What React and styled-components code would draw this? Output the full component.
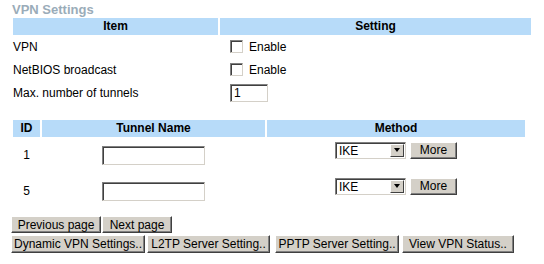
import React from "react";
import styled, { createGlobalStyle } from "styled-components";

const Global = createGlobalStyle`
    body {
        margin: 0;
        background: #fff;
        font-family: "Liberation Sans", Arial, sans-serif;
        font-size: 12px;
        color: #000;
    }
`;

const Page = styled.div`
    width: 544px;
    height: 264px;
    padding: 2px 0 0 13px;
    box-sizing: border-box;
`;

const Title = styled.div`
    margin-left: -1px;
    height: 16px;
    font-size: 13px;
    font-weight: bold;
    color: #9aacb9;
    line-height: 15px;
`;

const Grid = styled.div`
    display: grid;
    grid-template-columns: ${(p) => p.cols};
    column-gap: 2px;
    margin-top: ${(p) => p.top || 0}px;
`;

const Head = styled.div`
    height: 17px;
    background: #b7dbf9;
    font-weight: bold;
    text-align: center;
    line-height: 17px;
`;

const Cell = styled.div`
    height: ${(p) => p.h}px;
    display: flex;
    align-items: center;
    justify-content: ${(p) => (p.center ? "center" : "flex-start")};
    padding-left: ${(p) => p.pad || 0}px;
    padding-bottom: ${(p) => p.lift || 0}px;
    box-sizing: border-box;
`;

const Check = styled.span`
    width: 13px;
    height: 13px;
    box-sizing: border-box;
    border-style: solid;
    border-width: 1px;
    border-color: #808080 #d4d0c8 #d4d0c8 #808080;
    box-shadow: inset 1px 1px 0 #404040;
    background: #fff;
    margin-right: 6px;
`;

const TextBox = styled.div`
    width: ${(p) => p.w}px;
    height: ${(p) => p.h}px;
    box-sizing: border-box;
    border-style: solid;
    border-width: 1px;
    border-color: #808080 #d4d0c8 #d4d0c8 #808080;
    box-shadow: inset 1px 1px 0 #404040;
    background: #fff;
    padding: 2px 0 0 3px;
    line-height: 13px;
`;

const Select = styled.div`
    width: 71px;
    height: 17px;
    box-sizing: border-box;
    border-style: solid;
    border-width: 1px;
    border-color: #808080 #d4d0c8 #d4d0c8 #808080;
    box-shadow: inset 1px 1px 0 #404040;
    background: #fff;
    display: flex;
    align-items: stretch;
    padding: 1px 1px 0 1px;
`;

const SelectValue = styled.span`
    flex: 1;
    padding-left: 2px;
    line-height: 14px;
`;

const Arrow = styled.span`
    width: 14px;
    background: #d4d0c8;
    border-style: solid;
    border-width: 1px;
    border-color: #fff #404040 #404040 #fff;
    box-sizing: border-box;
    display: flex;
    align-items: center;
    justify-content: center;
    margin-bottom: 1px;
    &::after {
        content: "";
        border-left: 3.5px solid transparent;
        border-right: 3.5px solid transparent;
        border-top: 4px solid #000;
    }
`;

const Button = styled.button`
    width: ${(p) => p.w}px;
    height: ${(p) => p.h || 17}px;
    margin-left: ${(p) => p.gap || 0}px;
    padding: 0;
    background: #d4d0c8;
    border-style: solid;
    border-width: 1px;
    border-color: #fff #404040 #404040 #fff;
    box-shadow: inset -1px -1px 0 #808080;
    font-family: "Liberation Sans", Arial, sans-serif;
    font-size: 12px;
    color: #000;
    line-height: 14px;
    box-sizing: border-box;
`;

const Buttons = styled.div`
    display: flex;
    margin: ${(p) => p.top}px 0 0 -2px;
`;

const settings = [
    { label: "VPN", kind: "check" },
    { label: "NetBIOS broadcast", kind: "check" },
    { label: "Max. number of tunnels", kind: "input" },
];

const tunnels = [1, 5];

export default function App() {
    return (
        <Page>
            <Global />
            <Title>VPN Settings</Title>
            <Grid cols="205px 311px">
                <Head>Item</Head>
                <Head>Setting</Head>
                {settings.map((s) => (
                    <React.Fragment key={s.label}>
                        <Cell h={23}>{s.label}</Cell>
                        <Cell h={23} pad={10}>
                            {s.kind === "check" ? (
                                <>
                                    <Check />
                                    Enable
                                </>
                            ) : (
                                <TextBox w={38} h={18}>1</TextBox>
                            )}
                        </Cell>
                    </React.Fragment>
                ))}
            </Grid>
            <Grid cols="27px 223px 258px" top={16}>
                <Head>ID</Head>
                <Head>Tunnel Name</Head>
                <Head>Method</Head>
                {tunnels.map((id) => (
                    <React.Fragment key={id}>
                        <Cell h={36} center>
                            {id}
                        </Cell>
                        <Cell h={36} center>
                            <TextBox w={103} h={19} />
                        </Cell>
                        <Cell h={36} center lift={10}>
                            <Select>
                                <SelectValue>IKE</SelectValue>
                                <Arrow />
                            </Select>
                            <Button w={47} gap={4}>
                                More
                            </Button>
                        </Cell>
                    </React.Fragment>
                ))}
            </Grid>
            <Buttons top={7}>
                <Button w={90}>Previous page</Button>
                <Button w={70} gap={1}>
                    Next page
                </Button>
            </Buttons>
            <Buttons top={2}>
                <Button w={134} h={18}>
                    Dynamic VPN Settings..
                </Button>
                <Button w={123} h={18} gap={2}>
                    L2TP Server Setting..
                </Button>
                <Button w={124} h={18} gap={5}>
                    PPTP Server Setting..
                </Button>
                <Button w={112} h={18} gap={3}>
                    View VPN Status..
                </Button>
            </Buttons>
        </Page>
    );
}
